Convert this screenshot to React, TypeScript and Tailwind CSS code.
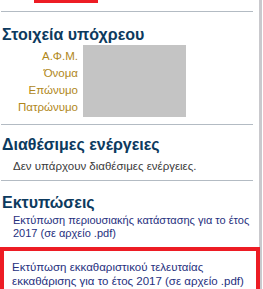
import React from "react";

const labels = ["Α.Φ.Μ.", "Όνομα", "Επώνυμο", "Πατρώνυμο"];

function Heading({ children }: { children: React.ReactNode }) {
  return <h2 className="text-[16px] font-bold leading-[20px] text-[#0c3a5e]">{children}</h2>;
}

export default function App() {
  return (
    <div className="relative h-[289px] w-[263px] overflow-hidden bg-white font-['Liberation_Sans',Arial,sans-serif]">
      <div className="flex h-full w-[262px] border-r-[3px] border-[#c9c9cd] pl-px">
        <div className="flex w-[252px] flex-col">
          <div className="ml-[33px] h-[3px] w-[64px] bg-[#ed1c24]" />
          <div className="mt-[8px] h-px bg-[#b3bbc3]" />

          <section className="pt-[13px] pl-[1px]">
            <Heading>Στοιχεία υπόχρεου</Heading>
            <div className="flex">
              <div className="flex w-[76px] flex-col items-end pt-[3px] text-[11.5px] text-[#b0871a]">
                {labels.map((l) => (
                  <div key={l} className="flex h-[17px] items-center">{l}</div>
                ))}
              </div>
              <div className="ml-[5px] h-[72px] w-[103px] bg-[#c4c4c4]" />
            </div>
          </section>

          <div className="mt-[7px] h-px bg-[#b3bbc3]" />

          <section className="pt-[10px] pl-[1px]">
            <Heading>Διαθέσιμες ενέργειες</Heading>
            <p className="mt-[4px] pl-[11px] text-[11.5px] leading-[14px] text-[#3a3a3a]">Δεν υπάρχουν διαθέσιμες ενέργειες.</p>
          </section>

          <div className="mt-[7px] h-px bg-[#b3bbc3]" />

          <section className="pt-[12px] pl-[1px]">
            <Heading>Εκτυπώσεις</Heading>
            <a className="mt-[1px] block pl-[11px] text-[11px] leading-[13px] text-[#26307e]">
              Εκτύπωση περιουσιακής κατάστασης για το έτος 2017 (σε αρχείο .pdf)
            </a>
          </section>
        </div>
      </div>

      <div className="absolute left-0 top-[247px] h-[60px] w-[260px] border-[4px] border-[#ed1c24] bg-white">
        <a className="block pl-[8px] pt-[9px] pr-[8px] text-[11.5px] leading-[14px] text-[#26307e]">
          Εκτύπωση εκκαθαριστικού τελευταίας εκκαθάρισης για το έτος 2017 (σε αρχείο .pdf)
        </a>
        <div className="ml-[8px] mt-[3px] w-[236px] border-t border-dotted border-[#9aa3ad]" />
      </div>
    </div>
  );
}
